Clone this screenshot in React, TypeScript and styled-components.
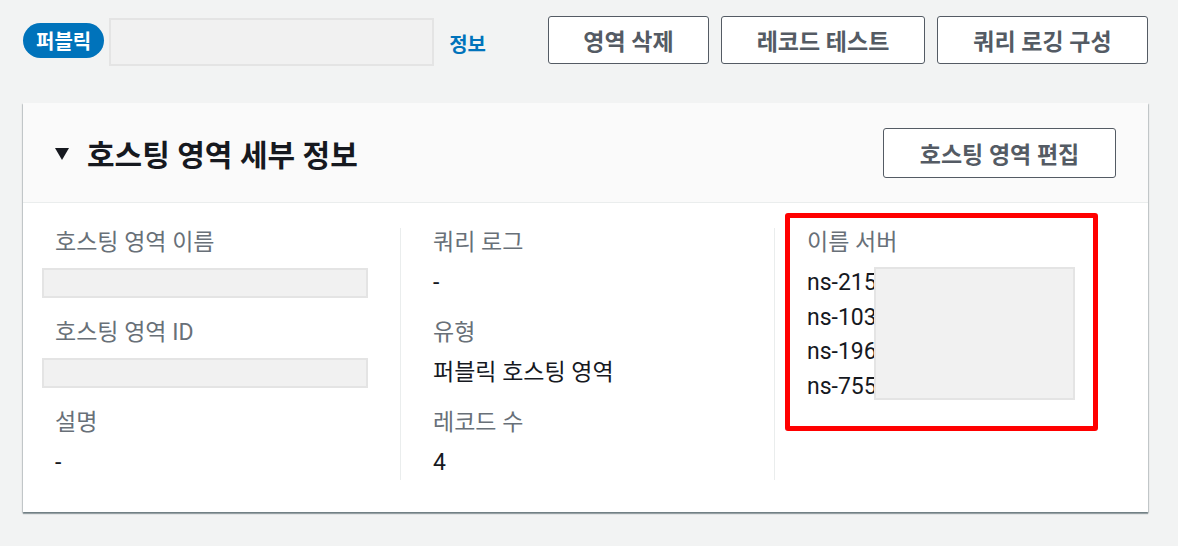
import React from 'react'
import styled, { createGlobalStyle } from 'styled-components'

const GlobalStyle = createGlobalStyle`
  html, body {
    margin: 0;
    padding: 0;
    background: #f2f3f3;
    font-family: Roboto, "Noto Sans CJK KR", sans-serif;
    color: #16191f;
  }
`

const Page = styled.main`
  padding: 16px 30px 32px 23px;
`

const TopBar = styled.div`
  display: flex;
  align-items: center;
  height: 48px;
`

const Badge = styled.span`
  display: inline-flex;
  align-items: center;
  height: 35px;
  padding: 0 13px;
  border-radius: 18px;
  background: #0073bb;
  color: #ffffff;
  font-size: 20px;
  font-weight: 700;
`

const Redacted = styled.div<{ $w: number; $h: number }>`
  width: ${p => p.$w}px;
  height: ${p => p.$h}px;
  box-sizing: border-box;
  background: #f1f1f1;
  border: 2px solid #e4e4e4;
`

const TitleRedacted = styled(Redacted)`
  margin-left: 5px;
  margin-top: 4px;
`

const InfoLink = styled.a`
  margin-left: 15px;
  margin-top: 6px;
  color: #0073bb;
  font-size: 20px;
  font-weight: 700;
  text-decoration: none;
`

const Actions = styled.div`
  margin-left: auto;
  display: flex;
  gap: 12px;
`

const Button = styled.button<{ $w: number; $h?: number }>`
  width: ${p => p.$w}px;
  height: ${p => p.$h ?? 48}px;
  box-sizing: border-box;
  background: #ffffff;
  border: 1px solid #545b64;
  border-radius: 3px;
  color: #545b64;
  font-family: inherit;
  font-size: 23px;
  font-weight: 700;
  cursor: pointer;
`

const Card = styled.section`
  margin-top: 39px;
  background: #ffffff;
  box-shadow: 0 2px 1px 0 rgba(0, 28, 36, 0.35), 1px 1px 1px 0 rgba(0, 28, 36, 0.15),
    -1px 1px 1px 0 rgba(0, 28, 36, 0.15);
`

const CardHeader = styled.header`
  height: 100px;
  box-sizing: border-box;
  display: flex;
  align-items: center;
  padding: 0 32px;
  background: #fafafa;
  border-bottom: 1px solid #eaeded;
`

const Caret = styled.span`
  width: 0;
  height: 0;
  border-left: 7px solid transparent;
  border-right: 7px solid transparent;
  border-top: 12px solid #16191f;
  margin-right: 18px;
  margin-top: 2px;
`

const Title = styled.h2`
  margin: 0;
  font-size: 30px;
  font-weight: 700;
  color: #16191f;
`

const HeaderButton = styled(Button)`
  margin-left: auto;
`

const Body = styled.div`
  display: grid;
  grid-template-columns: repeat(3, 1fr);
  padding: 25px 0 32px;
`

const Column = styled.div<{ $divider?: boolean }>`
  position: relative;
  padding: 0 32px 2px;
  border-left: ${p => (p.$divider ? '1px solid #eaeded' : 'none')};
  display: flex;
  flex-direction: column;

  & > :last-child {
    margin-bottom: 0;
  }
`

const Label = styled.div`
  font-size: 23px;
  line-height: 30px;
  color: #687078;
  font-weight: 400;
`

const Value = styled.div`
  font-size: 23px;
  line-height: 30px;
  margin-top: 10px;
  margin-bottom: 20px;
  color: #16191f;
`

const ValueRedacted = styled(Redacted)`
  margin-left: -13px;
  margin-top: 10px;
  margin-bottom: 20px;
`

const NsList = styled.div`
  position: relative;
  margin-top: 8px;
  font-size: 23px;
  line-height: 34.5px;
  color: #16191f;
`

const NsRedacted = styled(Redacted)`
  position: absolute;
  left: 67px;
  top: 1px;
`

const Highlight = styled.div`
  position: absolute;
  left: 10px;
  top: -15px;
  width: 313px;
  height: 218px;
  box-sizing: border-box;
  border: 5px solid #ff0000;
  border-radius: 3px;
  pointer-events: none;
`

const nameServers = ['ns-215', 'ns-103', 'ns-196', 'ns-755']

export default function App() {
  return (
    <>
      <GlobalStyle />
      <Page>
        <TopBar>
          <Badge>퍼블릭</Badge>
          <TitleRedacted $w={325} $h={48} />
          <InfoLink href="#">정보</InfoLink>
          <Actions>
            <Button $w={161}>영역 삭제</Button>
            <Button $w={204}>레코드 테스트</Button>
            <Button $w={211}>쿼리 로깅 구성</Button>
          </Actions>
        </TopBar>

        <Card>
          <CardHeader>
            <Caret />
            <Title>호스팅 영역 세부 정보</Title>
            <HeaderButton $w={233} $h={50}>호스팅 영역 편집</HeaderButton>
          </CardHeader>
          <Body>
            <Column>
              <Label>호스팅 영역 이름</Label>
              <ValueRedacted $w={326} $h={30} />
              <Label>호스팅 영역 ID</Label>
              <ValueRedacted $w={326} $h={30} />
              <Label>설명</Label>
              <Value>-</Value>
            </Column>
            <Column $divider>
              <Label>쿼리 로그</Label>
              <Value>-</Value>
              <Label>유형</Label>
              <Value>퍼블릭 호스팅 영역</Value>
              <Label>레코드 수</Label>
              <Value>4</Value>
            </Column>
            <Column $divider>
              <Highlight />
              <Label>이름 서버</Label>
              <NsList>
                {nameServers.map(ns => (
                  <div key={ns}>{ns}</div>
                ))}
                <NsRedacted $w={201} $h={133} />
              </NsList>
            </Column>
          </Body>
        </Card>
      </Page>
    </>
  )
}
